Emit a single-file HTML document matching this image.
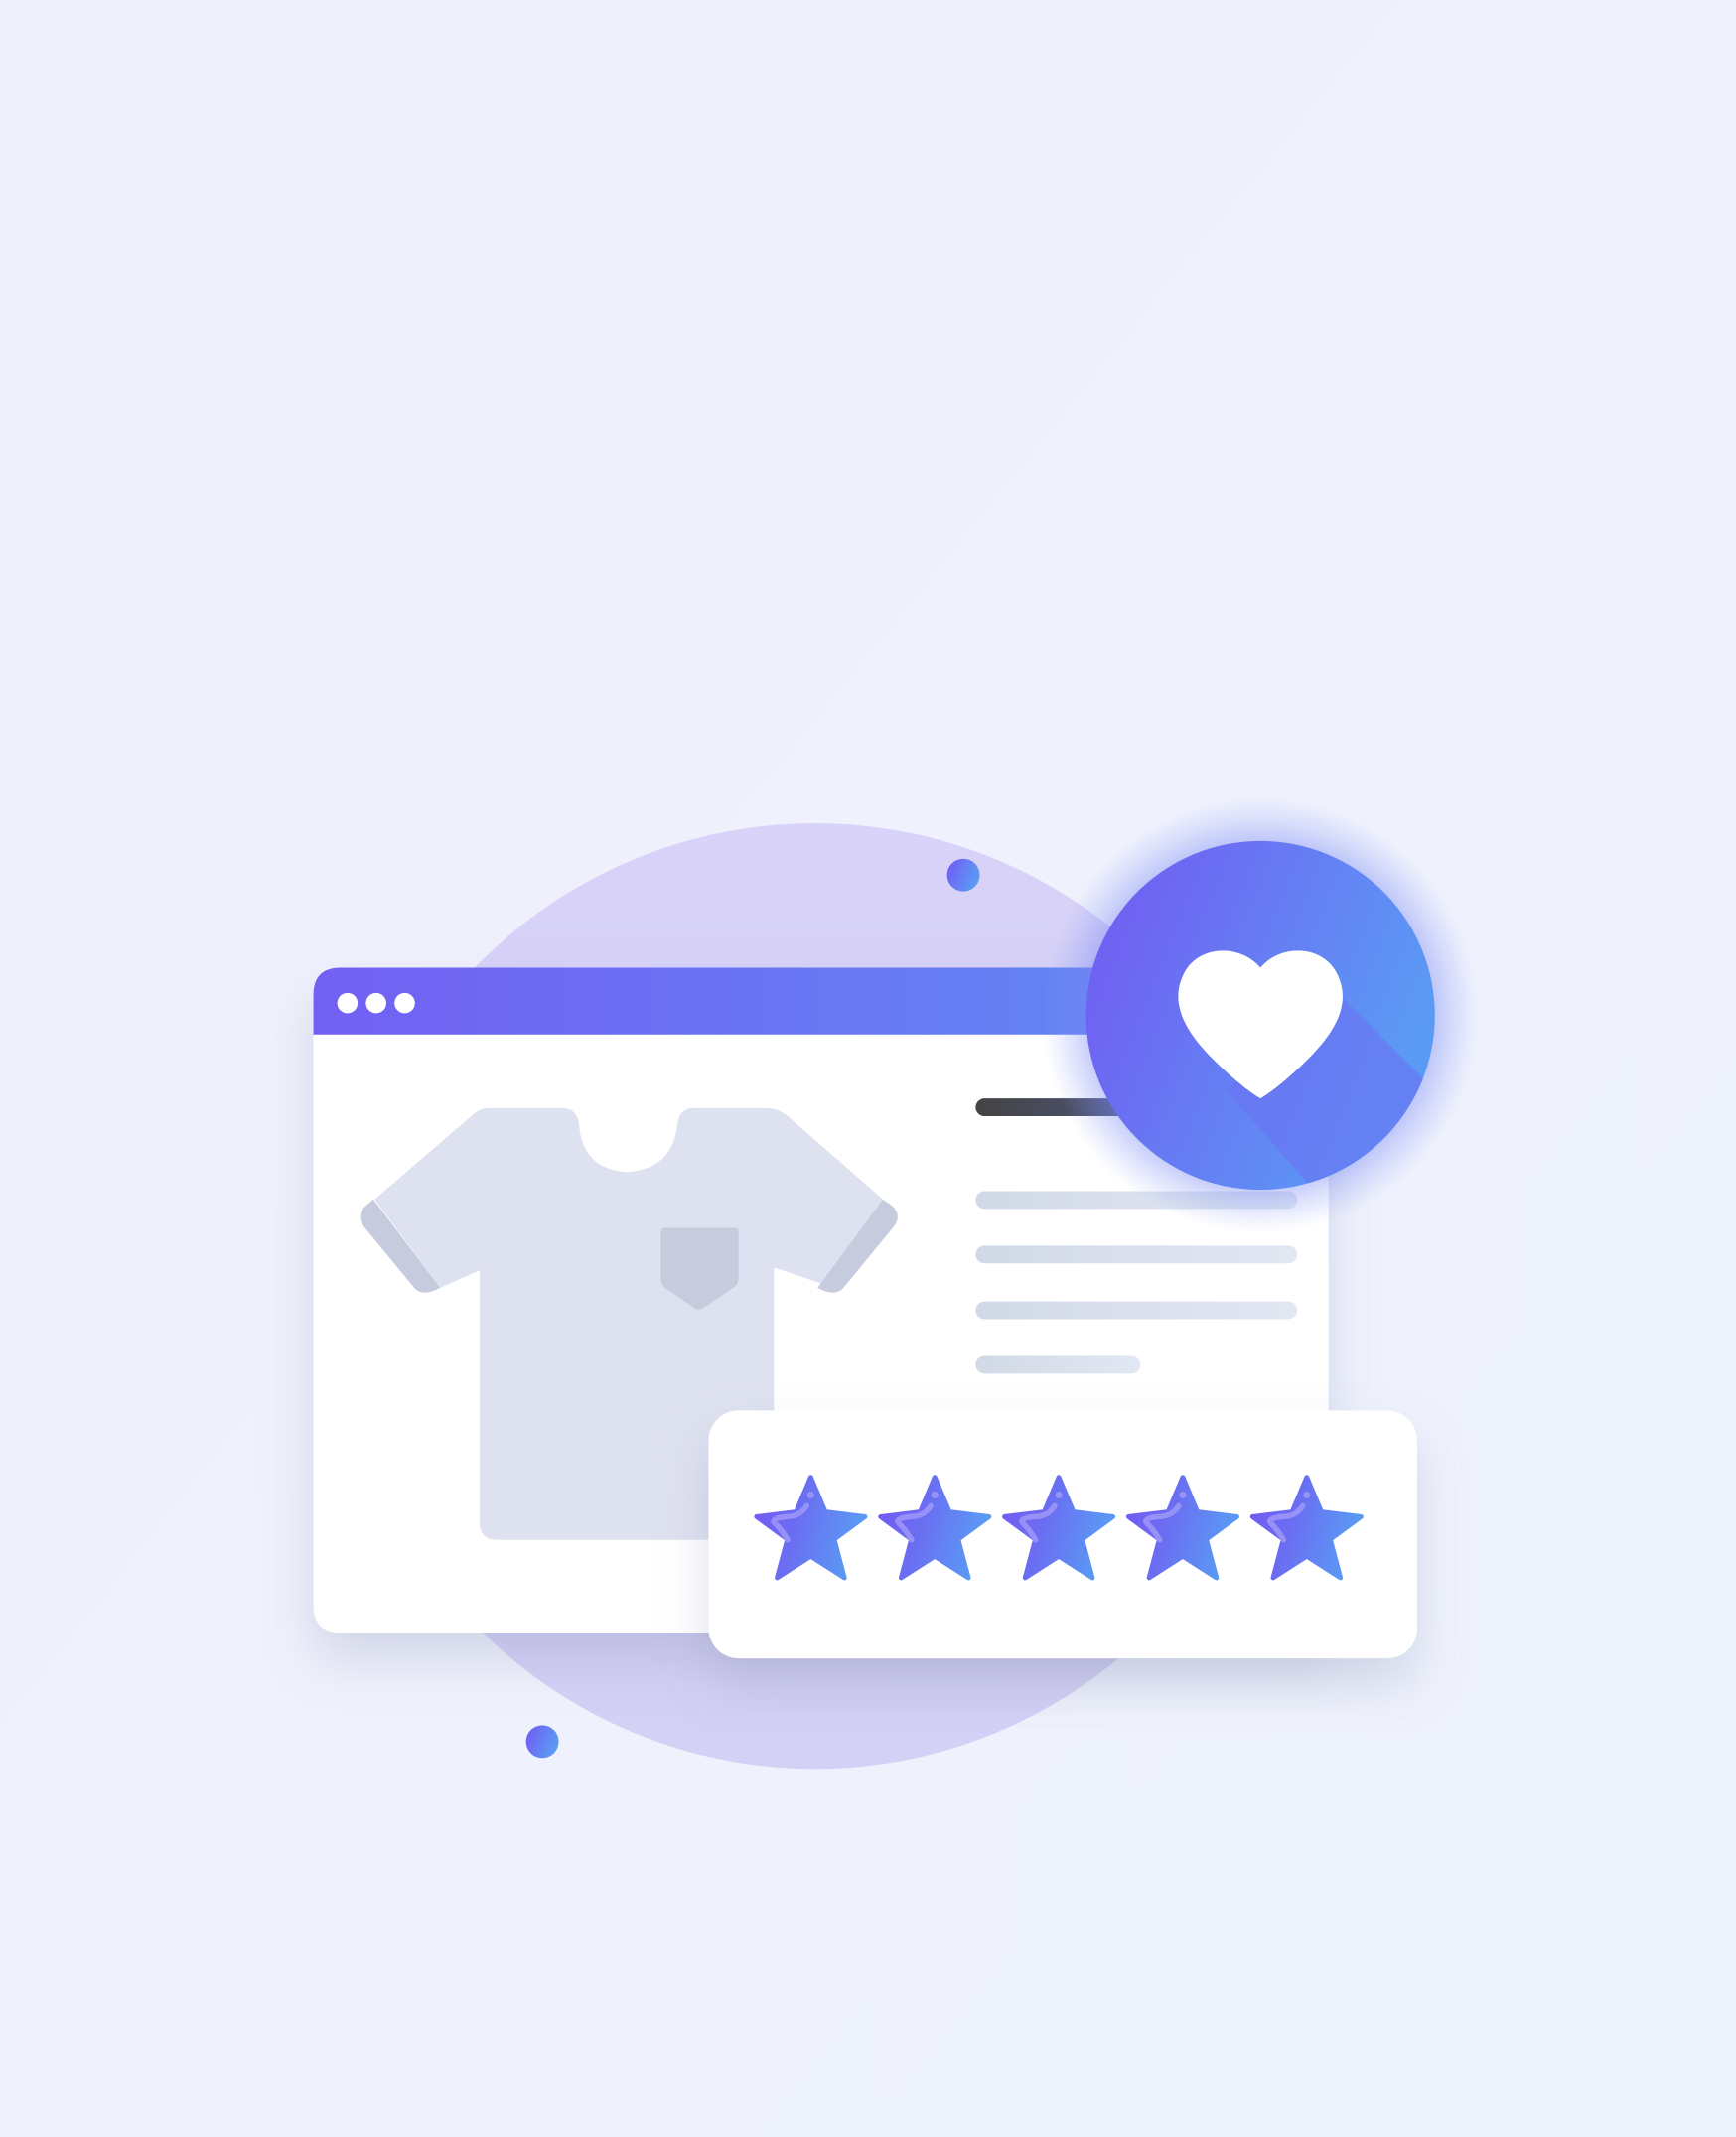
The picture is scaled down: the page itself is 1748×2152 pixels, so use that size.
<!DOCTYPE html>
<html><head><meta charset="utf-8"><style>
html,body{margin:0;padding:0;width:1748px;height:2152px;overflow:hidden;background:linear-gradient(135deg,#f0effc,#eef3fd);}
svg{display:block}
</style></head><body>
<svg width="1748" height="2152" viewBox="0 0 1274 1568" xmlns="http://www.w3.org/2000/svg">
<defs>
<linearGradient id="bg" x1="0" y1="0" x2="1" y2="1"><stop offset="0" stop-color="#f0effc"/><stop offset="1" stop-color="#eef3fd"/></linearGradient>
<linearGradient id="circ" x1="0" y1="0" x2="0" y2="1"><stop offset="0" stop-color="#d9d3f9"/><stop offset="0.6" stop-color="#cfcbf2"/><stop offset="1" stop-color="#d4d0f6"/></linearGradient>
<linearGradient id="hdr" x1="0" y1="0" x2="1" y2="0"><stop offset="0" stop-color="#7260f3"/><stop offset="1" stop-color="#5f8ef3"/></linearGradient>
<linearGradient id="pur" x1="0" y1="0" x2="1" y2="0.4"><stop offset="0" stop-color="#7358f2"/><stop offset="1" stop-color="#5b9af4"/></linearGradient>
<linearGradient id="spur" x1="0" y1="0" x2="1" y2="0.25"><stop offset="0" stop-color="#7458f2"/><stop offset="0.45" stop-color="#6a6ef2"/><stop offset="1" stop-color="#5b98f4"/></linearGradient>
<linearGradient id="dark" x1="0" y1="0" x2="1" y2="0"><stop offset="0" stop-color="#444"/><stop offset="0.5" stop-color="#4a4f66"/><stop offset="1" stop-color="#5f6ec8"/></linearGradient>
<linearGradient id="gl" x1="0" y1="0" x2="1" y2="0"><stop offset="0" stop-color="#d1d9e6"/><stop offset="1" stop-color="#e2e8f3"/></linearGradient>
<radialGradient id="glow" cx="0.5" cy="0.5" r="0.5"><stop offset="0.7" stop-color="#6a7cf2" stop-opacity="0.6"/><stop offset="1" stop-color="#8fa0f6" stop-opacity="0"/></radialGradient>
<filter id="sh" x="-20%" y="-20%" width="140%" height="150%"><feDropShadow dx="0" dy="20" stdDeviation="18" flood-color="#8f97b8" flood-opacity="0.3"/></filter>
<clipPath id="hc"><circle cx="925" cy="745" r="128"/></clipPath>
</defs>
<rect width="1274" height="1568" fill="url(#bg)"/>
<circle cx="598" cy="951" r="347" fill="url(#circ)"/>
<circle cx="707" cy="642" r="12" fill="url(#pur)"/>
<circle cx="398" cy="1278" r="12" fill="url(#pur)"/>
<g filter="url(#sh)">
<path d="M250,710 H955 Q975,710 975,730 V1198 H250 Q230,1198 230,1178 V730 Q230,710 250,710Z" fill="#fff"/>
</g>
<path d="M250,710 H975 V759 H230 V730 Q230,710 250,710Z" fill="url(#hdr)"/>
<circle cx="255" cy="736" r="7.5" fill="#fff"/>
<circle cx="276" cy="736" r="7.5" fill="#fff"/>
<circle cx="297" cy="736" r="7.5" fill="#fff"/>
<path d="M360,813 H412 Q424,813 425,826 Q428,858 460,860 Q493,858 497,826 Q498,813 510,813 H562 Q570,813 577,818 L648,880 L612,945 L568,930 V1130 H365 Q352,1130 352,1117 V932 L323,945 L275,880 L347,818 Q352,813 360,813Z" fill="#dee1ef"/>
<path d="M274,880 L323,945 Q310,952 304,945 L267,900 Q261,892 268,885Z" fill="#c6cbde"/>
<path d="M648,880 L600,945 Q613,952 619,945 L656,900 Q662,892 655,885Z" fill="#c6cbde"/>
<path d="M488,901 H539 Q542,901 542,904 V938 Q542,943 538,945 L516,960 Q513,962 510,960 L488,945 Q485,943 485,938 V904 Q485,901 488,901Z" fill="#c6cbde"/>
<rect x="716" y="806" width="160" height="13" rx="6.5" fill="url(#dark)"/>
<rect x="716" y="874" width="236" height="13" rx="6.5" fill="url(#gl)"/>
<rect x="716" y="914" width="236" height="13" rx="6.5" fill="url(#gl)"/>
<rect x="716" y="955" width="236" height="13" rx="6.5" fill="url(#gl)"/>
<rect x="716" y="995" width="121" height="13" rx="6.5" fill="url(#gl)"/>
<circle cx="925" cy="745" r="160" fill="url(#glow)"/>
<circle cx="925" cy="745" r="128" fill="url(#pur)"/>
<path d="M978,725 L1060,807 L1060,900 L970,880 L900,800 Z" fill="#6c6ff2" opacity="0.55" clip-path="url(#hc)"/>
<path d="M925,710 C910,692 878,693 868,716 C858,738 872,759 890,777 C905,792 918,802 925,806 C932,802 945,792 960,777 C978,759 992,738 982,716 C972,693 940,692 925,710Z" fill="#fff"/>
<g filter="url(#sh)">
<rect x="520" y="1035" width="520" height="182" rx="22" fill="#fff"/>
</g>
<defs>
<g id="star">
<path d="M0,-40 L10.7,-14.6 L39.8,-11 L17.2,5.6 L24.7,33.9 L0,18 L-24.7,33.9 L-17.2,5.6 L-39.8,-11 L-10.7,-14.6Z" fill="url(#spur)" stroke="url(#spur)" stroke-width="3.5" stroke-linejoin="round"/>
<path d="M-3,-19 Q-8,-11 -18,-11 Q-28,-10 -27,-7 Q-21,-1 -17,6" fill="none" stroke="#a59ef8" stroke-width="4" stroke-linecap="round" opacity="0.75"/>
<circle cx="0" cy="-27" r="2.6" fill="#a59ef8" opacity="0.75"/>
</g>
</defs>
<use href="#star" x="595" y="1124"/>
<use href="#star" x="686" y="1124"/>
<use href="#star" x="777" y="1124"/>
<use href="#star" x="868" y="1124"/>
<use href="#star" x="959" y="1124"/>
</svg>
</body></html>
